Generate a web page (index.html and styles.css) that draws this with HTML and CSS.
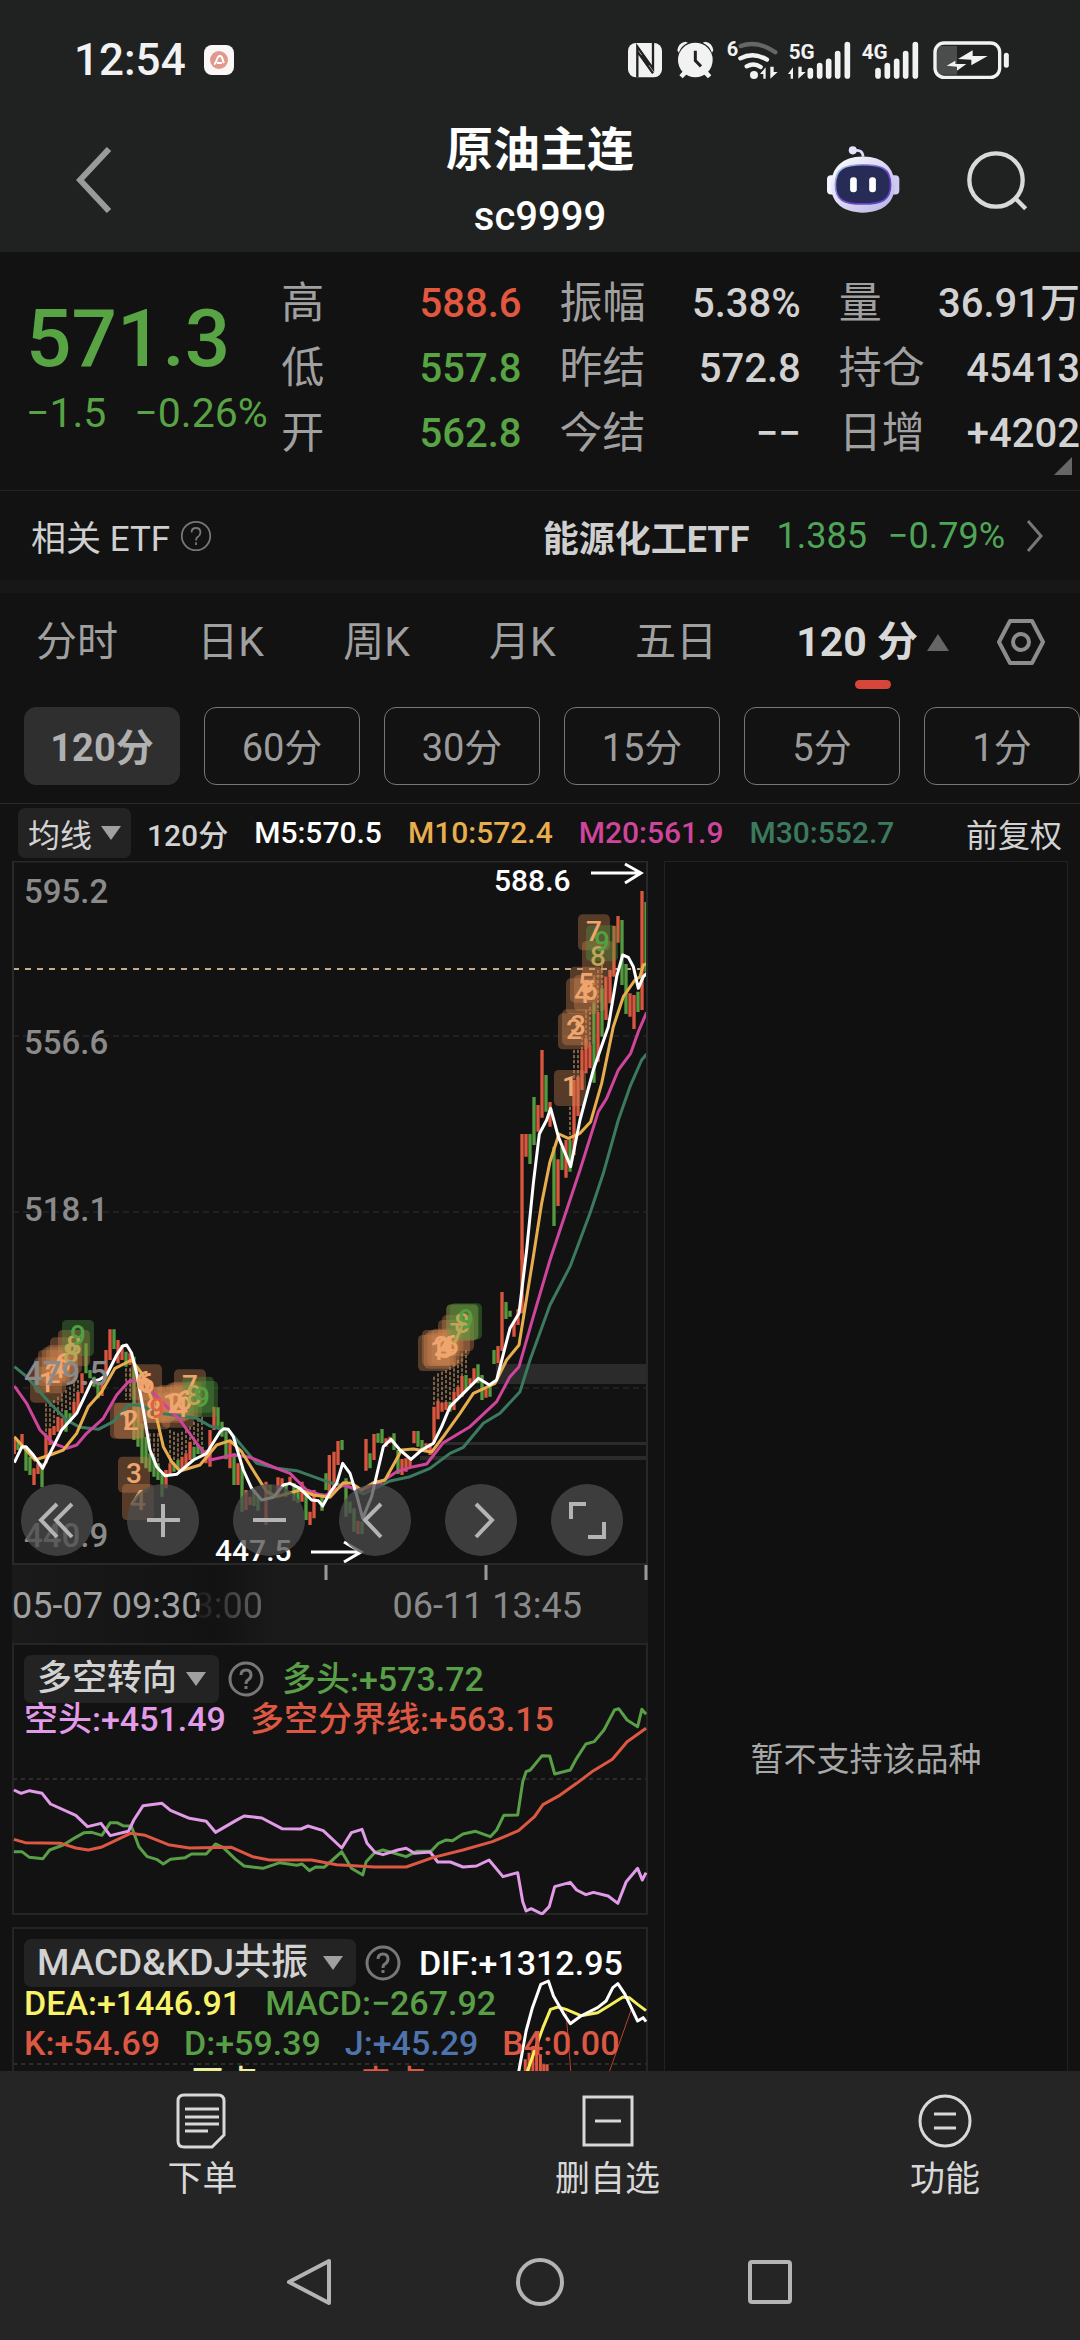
FILE: index.html
```html
<!DOCTYPE html>
<html lang="zh-CN">
<head>
<meta charset="utf-8">
<meta name="viewport" content="width=device-width, initial-scale=1">
<title>原油主连 sc9999</title>
<link rel="stylesheet" href="styles.css">
</head>
<body>
<header class="top">
  <div class="status">
    <span class="clock">12:54</span>
    <svg class="app-dot" viewBox="0 0 30 30" aria-hidden="true"><rect width="30" height="30" rx="8" fill="#fbf7f6"/><circle cx="15" cy="15" r="9" fill="#e0998c"/><path d="M10 19c3 0 2-8 6-8 3 0 2 4 4 7M13 18h5" fill="none" stroke="#fff" stroke-width="2"/></svg>
    <svg class="status-icons" viewBox="45 25 1161 126" aria-label="NFC 闹钟 Wi-Fi 5G 4G 充电中">
      <rect x="54" y="37" width="102" height="103" rx="24" fill="#f2f2f2"/>
      <path d="M82 140V48l47 66V37M82 62l47 66" fill="none" stroke="#202222" stroke-width="7"/>
      <path d="M94 74l22 30" stroke="#202222" stroke-width="8"/>
      <g fill="#f2f2f2"><circle cx="256" cy="88" r="52"/><path d="M206 66a52 52 0 0 1 28-30l-8-3a30 30 0 0 0-24 26zM306 66a52 52 0 0 0-28-30l8-3a30 30 0 0 1 24 26z"/><path d="M222 118l-14 16 10 9 16-16zM290 118l14 16-10 9-16-16z"/></g>
      <path d="M256 60v30l17 17" fill="none" stroke="#202222" stroke-width="9"/>
      <g font-family="Roboto, sans-serif" font-weight="700" fill="#f2f2f2"><text x="350" y="76" font-size="60">6</text><text x="536" y="86" font-size="62">5G</text><text x="755" y="86" font-size="62">4G</text></g>
      <g fill="none" stroke-linecap="round" stroke="#f2f2f2" stroke-width="13"><path d="M392 46q52-18 104 19" stroke="#656767"/><path d="M391 83q40-20 80 4M410 107q22-12 42 2"/></g>
      <circle cx="432" cy="133" r="12" fill="#f2f2f2"/>
      <path d="M467 144V110l-17 20h10v14zM481 108v36l22-20h-12v-16zM549 144V110l-15 20h8v14zM565 108v36l22-20h-12v-16z" fill="#f2f2f2"/>
      <g stroke="#f2f2f2" stroke-width="17" stroke-linecap="round"><path d="M601 120v16M629 105v31M656 92v44M683 69v67M712 42v94M804 120v16M832 105v31M860 92v44M887 69v67M916 42v94"/></g>
      <path d="M984 46h57v86h-57q-6-4-6-12V58q0-8 6-12z" fill="#4b4d4d"/>
      <rect x="975" y="37" width="194" height="103" rx="27" fill="none" stroke="#f2f2f2" stroke-width="10"/>
      <path d="M1189 74v30" stroke="#f2f2f2" stroke-width="15" stroke-linecap="round"/>
      <path d="M1044 85l44-26v17h45l-49 28v-17zM1010 105l26-15v10h33l-28 20v-12z" fill="#f2f2f2"/>
    </svg>
  </div>
  <div class="titlebar">
    <button class="icon-btn back" aria-label="返回"><svg viewBox="0 0 36 66" width="36" height="66"><path d="M33 2L4 33l29 31" fill="none" stroke="#9a9a9a" stroke-width="6"/></svg></button>
    <div class="name"><h1>原油主连</h1><p>sc9999</p></div>
    <div class="tools">
      <button class="icon-btn" aria-label="智能助手"><svg viewBox="70 35 230 215" width="77" height="72">
        <defs><linearGradient id="shell" x1="0" y1="0" x2="1" y2="1"><stop offset="0" stop-color="#ffffff"/><stop offset="1" stop-color="#b4b2e4"/></linearGradient><linearGradient id="rim" x1="0" y1="0" x2="1" y2="1"><stop offset="0" stop-color="#a9d4ee"/><stop offset=".6" stop-color="#6d3fd0"/><stop offset="1" stop-color="#5a47c8"/></linearGradient></defs>
        <path d="M154 55q28-6 30 18" fill="none" stroke="#dcdaf4" stroke-width="8"/><circle cx="153" cy="54" r="12" fill="#e6e4fa"/>
        <rect x="76" y="128" width="30" height="58" rx="12" fill="#f4f3ff"/><rect x="262" y="128" width="30" height="58" rx="12" fill="#cfccf2"/>
        <path d="M183 72c62 0 95 34 95 88 0 52-38 80-95 80s-95-28-95-80c0-54 33-88 95-88z" fill="url(#shell)"/>
        <path d="M183 97c54 0 83 10 83 60 0 46-26 57-83 57s-82-11-82-57c0-50 28-60 82-60z" fill="#262c55" stroke="url(#rim)" stroke-width="5"/>
        <rect x="145" y="134" width="20" height="45" rx="9" fill="#fff"/><rect x="202" y="134" width="20" height="45" rx="9" fill="#fff"/>
      </svg></button>
      <button class="icon-btn" aria-label="搜索"><svg viewBox="490 50 195 195" width="65" height="65"><circle cx="583" cy="146" r="80" fill="none" stroke="#d9d9d9" stroke-width="13"/><path d="M640 200l32 32" stroke="#d9d9d9" stroke-width="13"/></svg></button>
    </div>
  </div>
</header>

<main>
  <section class="quote">
    <div class="price down"><strong>571.3</strong><p><span>−1.5</span><span>−0.26%</span></p></div>
    <dl><dt>高</dt><dd class="up">588.6</dd><dt>低</dt><dd class="down">557.8</dd><dt>开</dt><dd class="down">562.8</dd></dl>
    <dl><dt>振幅</dt><dd>5.38%</dd><dt>昨结</dt><dd>572.8</dd><dt>今结</dt><dd>−−</dd></dl>
    <dl><dt>量</dt><dd>36.91万</dd><dt>持仓</dt><dd>45413</dd><dt>日增</dt><dd>+4202</dd></dl>
    <svg class="corner" viewBox="0 0 18 18" aria-hidden="true"><path d="M18 0v18H0z" fill="#666"/></svg>
  </section>

  <section class="etf">
    <span>相关 ETF</span>
    <svg class="help" viewBox="0 0 36 36"><circle cx="18" cy="18" r="16"/><path d="M13 14q0-5 5-5t5 5q0 3-3 5-2 1-2 4M18 25v3"/></svg>
    <a href="#etf"><b>能源化工ETF</b><span class="etf-down">1.385</span><span class="etf-down">−0.79%</span><svg viewBox="0 0 18 32" width="18" height="32"><path d="M2 1l13 15L2 31" fill="none" stroke="#777" stroke-width="3"/></svg></a>
  </section>

  <nav class="tabs">
    <div class="tablist">
      <button>分时</button><button>日K</button><button>周K</button><button>月K</button><button>五日</button>
      <button class="active"><span>120 分<svg viewBox="0 0 24 18" width="24" height="18"><path d="M12 1L23 18H1z" fill="#666"/></svg></span></button>
    </div>
    <button class="gear" aria-label="设置"><svg viewBox="0 0 50 48" width="50" height="48"><path d="M14 3h22l11 21-11 21H14L3 24z" fill="none" stroke="#8c8c8c" stroke-width="4" stroke-linejoin="round"/><circle cx="25" cy="24" r="8" fill="none" stroke="#8c8c8c" stroke-width="4"/></svg></button>
  </nav>
  <div class="periods"><button class="on">120分</button><button>60分</button><button>30分</button><button>15分</button><button>5分</button><button>1分</button></div>

  <div class="legend">
    <button class="drop">均线<i></i></button>
    <span>120分</span><span class="m5">M5:570.5</span><span class="m10">M10:572.4</span><span class="m20">M20:561.9</span><span class="m30">M30:552.7</span>
    <button class="adjust">前复权</button>
  </div>

  <div class="board">
    <div class="charts">
      <section class="kline">
        <svg class="plot" viewBox="12 861 636 704">
          <defs>
            <rect id="tag" width="96" height="108" rx="14" fill="#d08450" fill-opacity=".36"/>
            <rect id="tagg" width="96" height="108" rx="14" fill="#4f9c3c" fill-opacity=".36"/>
          </defs>
          <g fill="none" stroke="#2e2e2e" stroke-width="1" stroke-dasharray="6 4"><path d="M13 1036H647M13 1212H647M13 1388H647"/></g>
          <g fill="#2b2b2b"><path d="M496 1364h152v20H496zM444 1442h204v3H444zM420 1456h228v4H420z"/></g>
          <g class="axis-num"><text x="24" y="903">595.2</text><text x="24" y="1054">556.6</text><text x="24" y="1221">518.1</text><text x="24" y="1547">440.9</text></g>
          <path d="M13 969H647" fill="none" stroke="#c9ab84" stroke-width="2" stroke-dasharray="6 6"/>

          <g transform="translate(0 1250) scale(.33333)">
            <path class="cr" d="M43 560V612M66 552V595M102 655V705M114 640V672M138 555V640M150 535V585M162 528V555M174 500V545M186 505V540M222 455V500M234 425V480M246 370V430M306 400V438M318 300V385M330 238V330M354 270V340M366 285V330M390 310V345M498 660V715M510 640V675M546 620V660M558 610V650M570 575V630M618 600V640M630 540V650M642 470V540M690 570V655M714 640V705M738 720V780M750 740V765M798 695V825M834 682V740M846 685V710M870 680V700M906 695V755M930 785V825M942 720V805M988 615V740"/>
            <path class="cg" d="M54 570V600M78 600V662M90 620V675M126 640V712M198 480V545M210 490V520M258 280V370M270 360V385M282 380V410M294 400V445M342 238V297M378 305V350M402 320V570M414 470V590M426 520V640M438 560V655M450 610V665M462 620V680M474 640V690M486 670V740M522 640V665M534 630V660M582 590V625M594 585V612M606 590V612M654 472V530M666 515V560M678 545V628M702 610V705M726 650V785M762 720V768M774 740V782M810 705V740M858 700V740M882 700V752M894 715V758M918 720V810M966 730V782M978 670V720"/>
            <path class="stem" d="M138 460V555M150 460V530M162 450V525M174 440V500M186 430V500M198 420V480M210 410V480M222 400V455M234 390V425M378 355V450M390 355V450M450 550V610M462 550V625M474 550V640M510 540V640M522 545V640M534 550V630M546 545V620M558 540V610M570 530V575M582 515V590M594 505V585M606 500V590"/>
            <use href="#tag" x="90" y="350"/><use href="#tag" x="102" y="322"/><use href="#tag" x="114" y="300"/><use href="#tag" x="126" y="292"/><use href="#tag" x="138" y="285"/><use href="#tag" x="150" y="262"/><use href="#tag" x="174" y="240"/><use href="#tagg" x="186" y="210"/>
            <use href="#tag" x="330" y="458"/><use href="#tag" x="342" y="458"/><use href="#tag" x="354" y="620"/><use href="#tag" x="366" y="702"/><use href="#tag" x="390" y="343"/><use href="#tag" x="402" y="410"/><use href="#tag" x="414" y="430"/><use href="#tag" x="426" y="410"/>
            <use href="#tag" x="462" y="410"/><use href="#tag" x="474" y="405"/><use href="#tag" x="486" y="425"/><use href="#tag" x="498" y="400"/><use href="#tag" x="510" y="395"/><use href="#tag" x="522" y="358"/><use href="#tagg" x="546" y="380"/><use href="#tagg" x="558" y="393"/>
          </g>
          <g transform="translate(330 1250) scale(.33333)">
            <path class="cr" d="M12 605V720M24 573V645M84 812V852M108 567V662M132 552V630M168 565V590M180 560V580M216 627V675M228 625V665M240 625V650M252 543V580M288 580V605M300 580V615M312 470V580M324 452V508M336 458V485M348 455V480M372 425V480M384 410V440M396 378V440M420 385V405M432 355V400M468 415V443M504 288V340M516 126V303M552 215V260M564 178V225M576 0V190"/>
            <path class="cg" d="M36 570V600M48 685V800M60 755V790M72 775V845M96 815V852M120 610V655M144 550V578M156 537V580M192 550V600M204 600V672M264 543V590M276 570V600M360 455V485M408 375V420M444 343V400M456 375V450M480 400V440M492 300V342M528 156V207M540 182V200"/>
            <path class="stem" d="M312 380V470M324 370V455M336 365V458M348 360V455M360 350V455M372 340V425M384 330V410M396 310V378M408 300V375"/>
            <use href="#tag" x="264" y="255"/><use href="#tag" x="276" y="240"/><use href="#tag" x="282" y="248"/><use href="#tag" x="292" y="240"/><use href="#tag" x="304" y="236"/><use href="#tag" x="324" y="210"/><use href="#tag" x="336" y="195"/><use href="#tag" x="348" y="164"/><use href="#tagg" x="350" y="162"/><use href="#tagg" x="360" y="160"/>
          </g>
          <g transform="translate(480 860) scale(.33333)">
            <path class="cr" d="M126 822V1200M138 822V890M174 735V815M186 570V773M210 726V800M234 898V1038M258 840V953M282 660V885M294 650V768M306 570V690M318 535V640M330 555V625M354 455V605M378 350V480M390 330V430M402 198V350M414 168V248M450 400V470M462 405V507M486 93V450"/>
            <path class="cg" d="M150 822V912M162 711V855M198 645V755M222 860V1098M246 860V930M270 840V935M342 430V668M366 385V530M426 180V375M438 312V462M474 395V456M498 126V335"/>
            <path class="stem" d="M270 740V840M282 570V660M294 570V660M306 500V570M318 450V535M330 440V555M342 350V430M354 330V455M366 300V385"/>
            <use href="#tag" x="222" y="630"/><use href="#tag" x="234" y="460"/><use href="#tag" x="246" y="448"/><use href="#tag" x="258" y="355"/><use href="#tag" x="270" y="320"/><use href="#tag" x="282" y="345"/><use href="#tag" x="294" y="163"/><use href="#tag" x="306" y="243"/><use href="#tagg" x="318" y="196"/>
          </g>

          <g class="line" transform="translate(0 1250) scale(.33333)">
            <path stroke="#3c7a5f" d="M43 350L80 380 150 460 200 510 240 532 295 538 340 515 385 465 415 465 480 490 590 505 630 528 690 545 740 605 770 640 830 655 890 662 990 698 1050 712 1090 732 1170 693 1230 680 1290 655 1350 610 1390 592 1450 520 1500 490 1560 425 1590 330 1650 165 1710 50 1770-110 1810-230 1855-390 1890-490 1925-570 1940-588"/>
            <path stroke="#cf459b" d="M43 408L80 460 120 540 160 580 200 595 230 585 260 550 310 505 350 435 385 395 410 390 440 410 540 510 590 580 630 630 700 615 750 622 830 655 870 670 920 720 970 738 990 730 1030 705 1085 722 1140 698 1190 665 1240 650 1280 642 1330 578 1410 530 1490 455 1530 380 1557 350 1600 200 1650 30 1680-60 1740-240 1795-415 1820-455 1855-540 1892-590 1915-655 1940-713"/>
            <path stroke="#e8ae4e" d="M43 560L105 630 150 615 190 600 230 550 265 470 305 425 345 355 395 330 425 370 460 460 490 590 515 635 540 663 600 645 650 585 690 572 725 605 765 670 800 725 830 740 900 720 940 735 990 742 1030 698 1055 700 1085 720 1120 698 1155 690 1205 600 1240 597 1295 606 1330 560 1380 490 1420 430 1485 400 1520 330 1557 285 1600 20 1625-140 1650-265 1677-348 1705-335 1740-350 1772-385 1805-500 1840-670 1870-760 1905-810 1920-820 1930-855 1940-858"/>
            <path stroke="#fff" d="M43 638L66 590 78 590 100 615 128 655 145 620 185 540 230 490 275 395 300 388 320 375 350 315 368 288 380 285 395 310 410 370 430 480 450 600 470 650 495 677 530 673 580 630 620 610 660 545 672 536 685 538 700 560 730 660 755 715 785 750 820 742 850 705 870 700 900 715 935 750 955 752 968 768 990 728 1010 700 1028 640 1050 670 1070 735 1088 805 1115 740 1150 590 1173 568 1200 600 1233 628 1265 600 1300 580 1325 530 1350 470 1390 430 1435 385 1468 405 1490 390 1530 235 1557 190 1580 0 1600-200 1618-348 1640-390 1652-425 1675-340 1712-250 1740-390 1780-540 1825-670 1850-820 1868-885 1885-878 1900-850 1915-785 1930-820 1940-830"/>
          </g>
          <g class="tag-num" transform="translate(0 1250) scale(.33333)">
            <text x="140" y="427">1</text><text x="158" y="400">2</text><text x="172" y="385">4</text><text x="188" y="370">6</text><text x="212" y="340" fill="#bda658">8</text><text x="222" y="316" fill="#bda658">8</text><text x="234" y="286" fill="#559f43">9</text>
            <text x="378" y="540">1</text><text x="392" y="540">2</text><text x="402" y="700">3</text><text x="414" y="780">4</text><text x="430" y="422">6</text><text x="440" y="430">6</text><text x="460" y="508">8</text><text x="472" y="505" fill="#e2604a">9</text>
            <text x="512" y="490">1</text><text x="526" y="490">2</text><text x="540" y="500">4</text><text x="552" y="480">6</text><text x="570" y="435">7</text><text x="582" y="465" fill="#bda658">8</text><text x="606" y="470" fill="#559f43">9</text>
            <text x="1314" y="330">1</text><text x="1324" y="318">2</text><text x="1334" y="325">3</text><text x="1340" y="318">4</text><text x="1352" y="315">6</text><text x="1372" y="280" fill="#bda658">7</text><text x="1386" y="250" fill="#bda658">8</text><text x="1398" y="238" fill="#559f43">9</text>
            <text x="1710" y="-462">1</text><text x="1722" y="-632">2</text><text x="1734" y="-645">3</text><text x="1746" y="-740">4</text><text x="1758" y="-770">5</text><text x="1770" y="-750">6</text><text x="1782" y="-928">7</text><text x="1794" y="-852" fill="#bda658">8</text><text x="1806" y="-898" fill="#559f43">9</text>
          </g>
          <g class="axis-num"><text x="24" y="1385">479.5</text></g>
          <g class="mark"><text x="494" y="891">588.6</text><text x="215" y="1561">447.5</text><path d="M591 873h50M625 864l16 9-16 10M311 1552h50M344 1542l17 10-17 10"/></g>
          <path d="M13 1565V861.5H647V1565M12 1564H648" fill="none" stroke="#282828" stroke-width="2"/>
        </svg>
        <div class="pad">
          <button aria-label="快退"><svg viewBox="0 0 72 72"><path d="M36 20L20 36l16 17M51 20L35 36l16 17"/></svg></button>
          <button aria-label="放大"><svg viewBox="0 0 72 72"><path d="M36 20v33M20 36h33"/></svg></button>
          <button aria-label="缩小"><svg viewBox="0 0 72 72"><path d="M20 36h33"/></svg></button>
          <button aria-label="左移"><svg viewBox="0 0 72 72"><path d="M42 20L26 36l16 17"/></svg></button>
          <button aria-label="右移"><svg viewBox="0 0 72 72"><path d="M31 20l16 16-16 17"/></svg></button>
          <button aria-label="全屏"><svg viewBox="0 0 72 72"><path d="M20 35V20h15M53 38v15H37"/></svg></button>
        </div>
      </section>
      <div class="dates">
        <svg class="ticks" viewBox="12 0 636 15" aria-hidden="true"><path d="M326 0v15M486 0v15M646 0v15" stroke="#999" stroke-width="3"/></svg>
        <p><span class="first">05-07 09:30</span><span class="ghost">3:00</span><span class="last">06-11 13:45</span></p>
      </div>

      <section class="sub">
        <svg class="plot" viewBox="12 1643 636 272">
          <path d="M13 1779H647" stroke="#2c2c2c" stroke-width="2" stroke-dasharray="4 4"/>
          <path d="M13 1644H647V1914H13z" fill="none" stroke="#252525" stroke-width="2"/>
          <g class="line" transform="translate(0 1630) scale(.42088 .33333)">
            <path stroke="#589f47" d="M33 665L52 665 70 682 102 686 118 660 150 645 180 622 200 608 218 607 242 616 262 578 278 578 292 587 312 588 330 650 350 680 372 688 388 702 405 688 440 683 455 672 490 672 512 642 530 652 560 688 580 708 625 715 665 698 705 706 718 702 735 722 750 711 770 712 790 690 812 665 835 715 862 735 870 695 890 668 910 660 965 680 990 664 1024 664 1042 640 1060 630 1075 632 1100 612 1130 604 1165 620 1180 600 1197 556 1230 555 1242 455 1250 425 1260 420 1288 377 1306 378 1318 432 1355 420 1370 385 1392 342 1412 335 1435 300 1460 240 1470 236 1490 270 1515 290 1525 238 1535 253"/>
            <path stroke="#e29be8" d="M33 480L50 490 70 482 100 490 120 522 180 556 208 590 240 580 262 617 305 604 318 570 340 527 385 520 405 541 450 565 490 574 512 607 560 572 580 558 622 564 670 596 715 597 732 588 768 602 812 654 835 608 860 598 872 640 892 668 910 674 945 660 965 655 985 670 1022 666 1040 696 1070 696 1100 711 1132 708 1162 690 1195 740 1230 728 1242 815 1250 843 1262 836 1288 852 1305 830 1318 770 1355 757 1370 780 1392 794 1410 787 1445 798 1468 820 1488 755 1515 715 1526 750 1535 728"/>
            <path stroke="#dc5843" d="M33 628L60 638 145 640 180 654 210 660 240 652 310 610 345 616 400 644 450 654 550 652 600 680 640 690 740 690 800 704 890 711 965 711 1030 682 1100 660 1170 635 1232 602 1270 560 1290 524 1330 496 1370 460 1410 422 1455 388 1490 335 1535 295"/>
          </g>
        </svg>
        <div class="readout">
          <p><button class="drop big">多空转向<i></i></button><svg class="help" viewBox="0 0 36 36"><circle cx="18" cy="18" r="16"/><path d="M13 14q0-5 5-5t5 5q0 3-3 5-2 1-2 4M18 25v3"/></svg><span class="c-green">多头:+573.72</span></p>
          <p><span class="c-pink">空头:+451.49</span><span class="c-red">多空分界线:+563.15</span></p>
        </div>
      </section>

      <section class="sub">
        <svg class="plot" viewBox="12 1926 636 272">
          <path d="M13 2063H647" stroke="#2c2c2c" stroke-width="2" stroke-dasharray="4 4"/>
          <path d="M13 1927H647V2197H13z" fill="none" stroke="#252525" stroke-width="2"/>
          <g class="line" transform="translate(0 1920) scale(.42088 .33333)">
            <path stroke="#dc5843" d="M1248 480V415M1257 480V395M1266 480V375M1275 480V390M1284 480V400M1292 480V430M1300 480V430"/>
            <path class="hair" stroke="#b4432f" d="M1345 275L1358 480M1500 265L1440 480"/>
            <path stroke="#f6ef5a" d="M1245 480L1270 390 1290 320 1308 265 1325 258 1345 265 1380 284 1420 275 1450 252 1480 228 1495 230 1515 250 1535 269"/>
            <path stroke="#fff" d="M1230 470L1250 330 1265 260 1285 190 1303 180 1315 225 1340 280 1355 308 1380 285 1420 260 1440 240 1456 200 1468 188 1485 220 1515 300 1528 290 1535 302"/>
          </g>
        </svg>
        <div class="readout">
          <p><button class="drop big wide">MACD&amp;KDJ共振<i></i></button><svg class="help" viewBox="0 0 36 36"><circle cx="18" cy="18" r="16"/><path d="M13 14q0-5 5-5t5 5q0 3-3 5-2 1-2 4M18 25v3"/></svg><span class="c-white">DIF:+1312.95</span></p>
          <p><span class="c-yellow">DEA:+1446.91</span><span class="c-green">MACD:−267.92</span></p>
          <p><span class="c-red">K:+54.69</span><span class="c-green">D:+59.39</span><span class="c-blue">J:+45.29</span><span class="c-red">B4:0.00</span></p>
          <p><span class="c-lime">BXG:0.00</span><span class="c-pale">买点:0.00</span><span class="c-red">卖点:0.00</span></p>
        </div>
      </section>
    </div>
    <aside><p>暂不支持该品种</p></aside>
  </div>
</main>

<footer>
  <nav class="actions">
    <button><svg viewBox="0 0 56 56"><path d="M9 2h34q6 0 6 6v34L37 54H9q-6 0-6-6V8q0-6 6-6zM10 16h34M10 24h34M10 31h34M10 38h23"/></svg>下单</button>
    <button><svg viewBox="0 0 56 56"><path d="M4 4h48v48H4zM15 28h26"/></svg>删自选</button>
    <button class="narrow"><svg viewBox="0 0 56 56"><circle cx="28" cy="28" r="25"/><path d="M17 21h22M17 35h22"/></svg>功能</button>
  </nav>
  <nav class="system">
    <button aria-label="返回键"><svg viewBox="0 0 50 50"><path d="M44 4v42L4 25z"/></svg></button>
    <button aria-label="主屏幕"><svg viewBox="0 0 50 50"><circle cx="25" cy="25" r="22"/></svg></button>
    <button aria-label="最近任务"><svg viewBox="0 0 50 50"><rect x="5" y="5" width="40" height="40" rx="2"/></svg></button>
  </nav>
</footer>
</body>
</html>
```
FILE: styles.css
```css
* { box-sizing: border-box; }
body, h1, p, dl, dd { margin: 0; }
body {
  height: 100vh;
  display: flex;
  flex-direction: column;
  overflow: hidden;
  background: #121212;
  color: #d2d2d2;
  font-family: Roboto, "Noto Sans CJK SC", sans-serif;
  font-size: 36px;
}
button {
  padding: 0;
  border: 0;
  background: none;
  color: inherit;
  font: inherit;
  white-space: nowrap;
}
svg { display: block; flex: none; }

/* header */
.top { background: #202222; color: #fff; }
.status { height: 120px; padding: 0 68px 0 74px; display: flex; align-items: center; gap: 18px; }
.clock { font-size: 44px; font-weight: 500; color: #f2f2f2; }
.app-dot { width: 30px; height: 30px; }
.status-icons { width: 387px; height: 42px; margin-left: auto; }
.titlebar { display: grid; grid-template-columns: 1fr auto 1fr; }
.icon-btn { height: 120px; display: flex; align-items: center; }
.name { text-align: center; }
.name h1 { font-size: 47px; line-height: 60px; font-weight: 700; }
.name p { font-size: 40px; line-height: 74px; height: 72px; font-weight: 500; }
.back { padding-left: 76px; }
.tools { display: flex; justify-content: flex-end; gap: 63px; padding-right: 50px; }

/* quote */
.quote {
  position: relative;
  display: grid;
  grid-template-columns: minmax(0, 217fr) minmax(0, 240fr) minmax(0, 241fr) minmax(0, 241fr);
  column-gap: 38px;
  padding: 19px 0 24px 26px;
  border-bottom: 1px solid #222;
  white-space: nowrap;
}
.price strong { display: block; margin-top: 28px; font-size: 80px; line-height: 80px; font-weight: 500; }
.price p { display: flex; gap: 28px; font-size: 41px; line-height: 68px; }
.quote dl { display: grid; grid-template-columns: auto 1fr; grid-auto-rows: 65px; align-items: center; font-size: 40px; }
.quote dt { font-size: 43px; color: #a0a0a0; line-height: 65px; }
.quote dd { text-align: right; line-height: 65px; font-weight: 500; }
.down, .quote .down { color: #58a344; }
.quote .up { color: #e2583f; }
.corner { position: absolute; right: 8px; bottom: 15px; width: 18px; height: 18px; }

/* etf */
.etf { display: flex; align-items: center; height: 102px; padding: 0 36px 0 31px; border-bottom: 13px solid #171717; color: #cfcfcf; font-size: 35px; }
.help { width: 36px; height: 36px; fill: none; stroke: #777; stroke-width: 3; }
.etf .help { width: 32px; height: 32px; margin-left: 10px; stroke-width: 2; }
.etf a { margin-left: auto; display: flex; align-items: center; gap: 21px; color: inherit; text-decoration: none; }
.etf b { font-size: 36px; font-weight: 700; margin-right: 6px; }
.etf-down { font-size: 36px; color: #4fa557; }

/* tabs */
.tabs { display: flex; align-items: flex-start; padding: 20px 34px 18px 36px; font-size: 41px; color: #a0a0a0; }
.tablist { flex: 1; display: flex; justify-content: space-between; align-items: flex-start; margin-right: 46px; }
.tablist button { line-height: 58px; }
.tablist .active { color: #d8d8d8; font-weight: 700; }
.active span { display: flex; align-items: center; gap: 8px; }
.active::after { content: ""; display: block; width: 36px; height: 9px; margin: 9px auto 0; border-radius: 5px; background: #d6463a; }
.gear { height: 58px; }
.periods { display: grid; grid-template-columns: repeat(6, 1fr); gap: 24px; padding-left: 24px; margin-bottom: 18px; }
.periods button { height: 78px; padding-bottom: 4px; border: 1px solid #777; border-radius: 12px; color: #9c9c9c; font-size: 38px; }
.periods .on { background: #2f2f2f; border-color: #2f2f2f; color: #b0b0b0; font-weight: 700; }

/* chart legend */
.legend { display: flex; align-items: center; height: 58px; padding: 0 18px; border-top: 1px solid #2b2b2b; font-size: 30px; font-weight: 500; gap: 26px; white-space: nowrap; }
.drop { display: flex; align-items: center; gap: 9px; height: 50px; padding: 0 10px; border-radius: 7px; background: #232323; font-size: 32px; font-weight: 400; }
.drop i { border: 10px solid transparent; border-top: 14px solid #a0a0a0; border-bottom: 0; }
.legend .drop { margin-right: -10px; }
.adjust { margin-left: auto; font-size: 32px; font-weight: 400; }
.m5 { color: #fff; }
.m10 { color: #e8ae4e; }
.m20 { color: #cf459b; }
.m30 { color: #3c7a5f; }

/* board */
.board { display: grid; grid-template-columns: 159fr 101fr; column-gap: 16px; padding: 0 12px; }
main { flex: 1; min-height: 0; overflow: hidden; }
.plot { width: 100%; height: auto; }
.kline { position: relative; }
.axis-num { fill: #8a8a8a; font-size: 33px; font-weight: 500; }
.mark { fill: #fff; font-size: 30px; font-weight: 500; }
.mark path { fill: none; stroke: #fff; stroke-width: 3; }
.cr, .cg, .stem { fill: none; stroke-width: 10; }
.cr { stroke: #d9573f; }
.cg { stroke: #55993f; }
.stem { stroke: #94704f; stroke-width: 5; stroke-dasharray: 10 5; }
.line path { fill: none; stroke-width: 3; vector-effect: non-scaling-stroke; stroke-linejoin: round; }
.line .hair { stroke-width: 1; }
.tag-num { fill: #efa66e; font-size: 84px; font-weight: 500; text-anchor: middle; }
.pad { position: absolute; left: 9px; right: 25px; bottom: 9px; display: flex; justify-content: space-between; }
.pad button { width: 72px; height: 72px; border-radius: 50%; background: rgba(76, 76, 76, .75); }
.pad path { fill: none; stroke: #b4b4b4; stroke-width: 4; }
.dates { height: 78px; background: linear-gradient(90deg, #1a1a1a 0, #121212 32%, #1a1a1a 42%); font-size: 36px; color: #8a8a8a; }
.ticks { width: 100%; height: auto; }
.dates p { display: flex; line-height: 53px; }
.first { color: #a0a0a0; }
.ghost { margin-left: -8px; background: linear-gradient(90deg, #161616, #666); background-clip: text; color: transparent; }
.last { margin-left: auto; padding-right: 66px; }

.sub { display: grid; margin-bottom: 12px; }
.sub > * { grid-area: 1 / 1; }
.readout { padding: 16px 0 0 12px; font-size: 34px; font-weight: 500; white-space: nowrap; }
.readout p { display: flex; gap: 24px; height: 40px; line-height: 40px; align-items: center; }
.readout p:first-child { gap: 0; }
.drop.big { height: 48px; padding: 0 13px; font-size: 35px; font-weight: 500; }
.drop.wide { width: 332px; justify-content: space-between; font-size: 37px; }
.readout .help { margin: 0 18px 0 9px; }
.c-green { color: #589f47; }
.c-pink { color: #e29be8; }
.c-red { color: #dc5843; }
.c-white { color: #fff; }
.c-yellow { color: #f9f36a; }
.c-blue { color: #4f74ac; }
.c-lime { color: #7cc857; }
.c-pale { color: #ecefa2; }
aside { border: 1px solid #222; padding-top: 873px; background: #101010; text-align: center; font-size: 33px; line-height: 50px; color: #a8a8a8; }

/* bottom bars */
footer { background: #252525; }
.actions { display: flex; height: 144px; color: #d8d8d8; font-size: 35px; }
.actions button { flex: 3; display: flex; flex-direction: column; align-items: center; padding-top: 22px; line-height: 62px; }
.actions .narrow { flex: 2; }
.actions svg { width: 56px; height: 56px; fill: none; stroke: #d8d8d8; stroke-width: 3; }
.system { display: flex; justify-content: center; gap: 180px; height: 125px; padding-top: 42px; align-items: flex-start; }
.system svg { width: 50px; height: 50px; fill: none; stroke: #b4b4b4; stroke-width: 4; stroke-linejoin: round; }
```
